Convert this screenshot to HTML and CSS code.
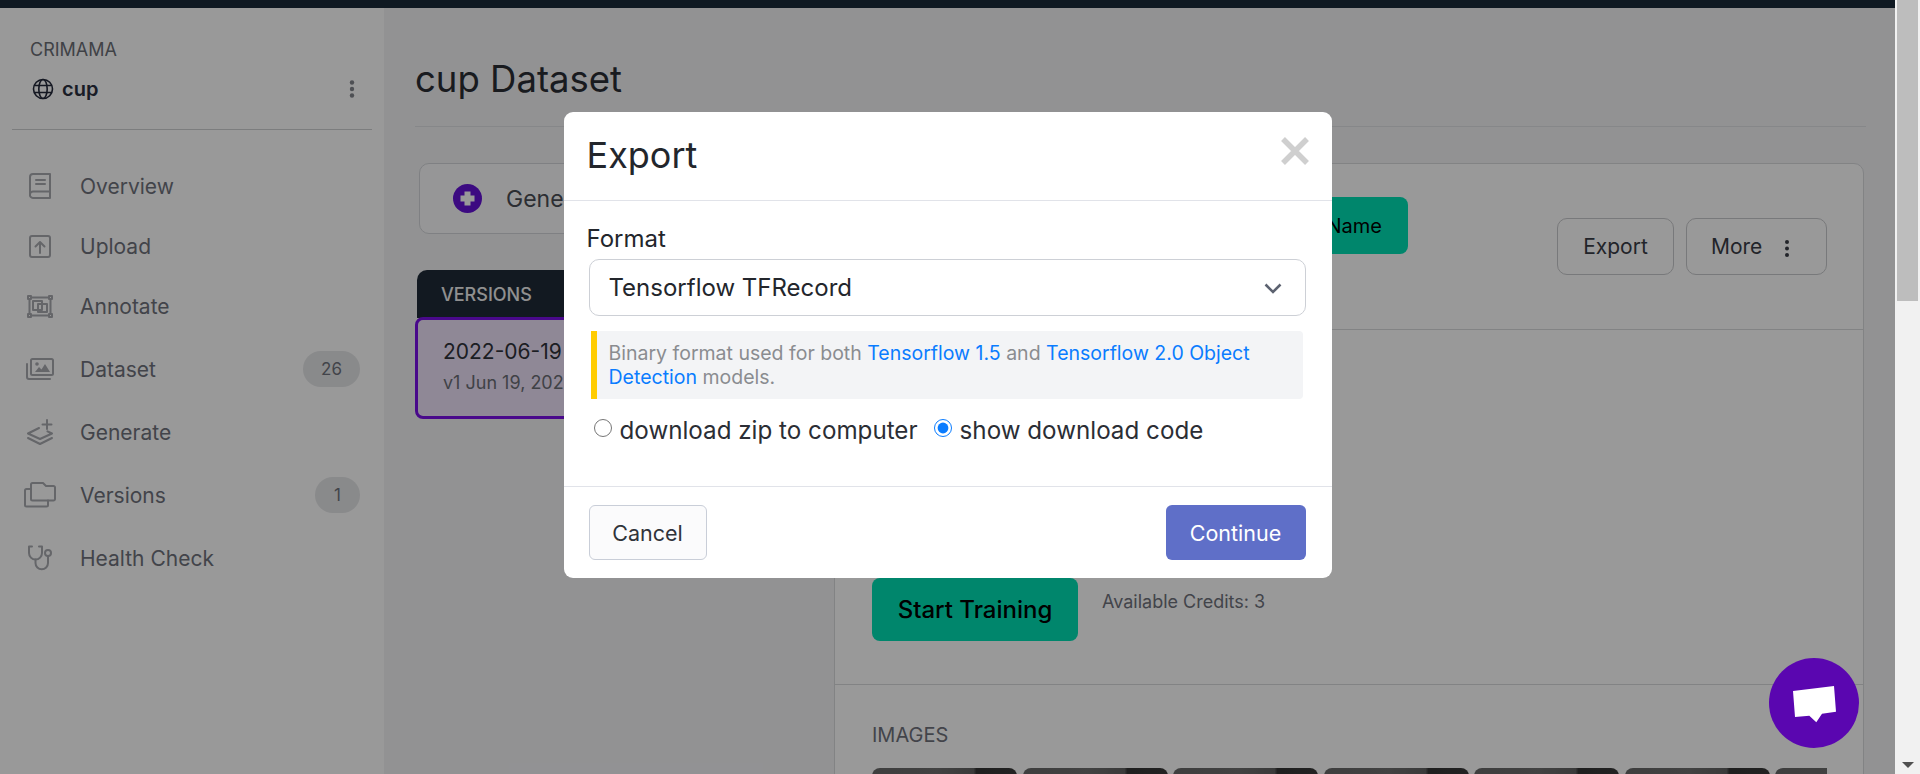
FILE: index.html
```html
<!DOCTYPE html>
<html lang="en">
<head>
  <meta charset="UTF-8">
  <title>cup Dataset</title>
  <link rel="stylesheet" href="styles.css">
</head>
<body>

<div class="page">
  <div class="topbar"></div>

  <div class="layout">
    <aside class="sidebar">
      <div class="workspace">CRIMAMA</div>
      <div class="project">
        <svg class="globe" viewBox="0 0 22 22" width="22" height="22"><circle cx="11" cy="11" r="9.5"/><ellipse cx="11" cy="11" rx="4.2" ry="9.5"/><path d="M2 7.5h18M2 14.5h18"/></svg>
        <span class="project-name">cup</span>
        <svg class="project-dots" viewBox="0 0 6 18" width="6" height="18"><circle cx="3" cy="2.5" r="2.2"/><circle cx="3" cy="9" r="2.2"/><circle cx="3" cy="15.5" r="2.2"/></svg>
      </div>
      <hr class="side-line">

      <nav class="nav">
        <a class="nav-item">
          <span class="nav-icon"><svg viewBox="0 0 22 26" width="22" height="26"><path d="M1 21V4a3 3 0 0 1 3-3h17v24H4a3 3 0 0 1-3-3.5a3 3 0 0 1 3-3h17"/><path d="M7 7h9M7 11h9"/></svg></span>
          Overview
        </a>
        <a class="nav-item">
          <span class="nav-icon"><svg viewBox="0 0 22 23" width="22" height="23"><rect x="1" y="1" width="20" height="21" rx="2"/><path d="M11 18V7M6.5 11.5 11 7l4.5 4.5"/></svg></span>
          Upload
        </a>
        <a class="nav-item">
          <span class="nav-icon"><svg viewBox="0 0 26 23" width="26" height="23"><rect x="1" y="1" width="3" height="3"/><rect x="22" y="1" width="3" height="3"/><rect x="1" y="19" width="3" height="3"/><rect x="22" y="19" width="3" height="3"/><path d="M4 2.5h18M4 20.5h18M2.5 4v15M23.5 4v15"/><rect x="6" y="6" width="9" height="9"/><rect x="11" y="9" width="9" height="8"/></svg></span>
          Annotate
        </a>
        <a class="nav-item nav-item-spaced">
          <span class="nav-icon"><svg viewBox="0 0 28 22" width="28" height="22"><rect x="5" y="1" width="22" height="16" rx="1.5"/><path d="M1 6v13a2 2 0 0 0 2 2h21"/><path class="solid" d="M9 14l4-5 2.5 2.5L19 6l5 8z"/><circle class="solid" cx="11" cy="6" r="1.8"/></svg></span>
          Dataset
          <span class="badge">26</span>
        </a>
        <a class="nav-item nav-item-spaced">
          <span class="nav-icon"><svg viewBox="0 0 26 26" width="26" height="26"><path d="M12 9 1 14.5l12 5.5 12-5.5-4.5-2.2"/><path d="M1 19l12 6 12-6"/><path d="M20 1v9M15.5 5.5h9"/></svg></span>
          Generate
        </a>
        <a class="nav-item nav-item-spaced">
          <span class="nav-icon"><svg viewBox="0 0 32 26" width="32" height="26"><path d="M7 16.5V2.5A1.5 1.5 0 0 1 8.5 1H19l3 3h7.5A1.5 1.5 0 0 1 31 5.5V17a1.5 1.5 0 0 1-1.5 1.500h-21A1.500 1.500 0 0 1 7 17z"/><path d="M7 7H2.500A1.500 1.500 0 0 0 1 8.500V23a1.500 1.500 0 0 0 1.500 1.500h20A1.500 1.500 0 0 0 24 23v-4.500"/></svg></span>
          Versions
          <span class="badge">1</span>
        </a>
        <a class="nav-item nav-item-spaced">
          <span class="nav-icon"><svg viewBox="0 0 26 26" width="26" height="26"><path d="M5 1.500H2V8a6.500 6.500 0 0 0 13 0V1.500h-3"/><path d="M8.500 14.500V18a6.200 6.200 0 0 0 12.500 0v-7"/><circle cx="21" cy="8" r="3"/></svg></span>
          Health Check
        </a>
      </nav>
    </aside>

    <main class="main">
      <h1 class="page-title">cup Dataset</h1>

      <div class="columns">
        <section class="left-col">
          <div class="generate-card">
            <svg class="plus" viewBox="0 0 29 29" width="29" height="29"><circle cx="14.5" cy="14.5" r="14.5"/><path d="M14.5 7.5v14M7.5 14.5h14"/></svg>
            Generate New Version
          </div>
          <div class="versions-head">VERSIONS</div>
          <div class="version-card">
            <div class="version-name">2022-06-19 1:12pm</div>
            <div class="version-date">v1 Jun 19, 2022</div>
          </div>
        </section>

        <section class="panel">
          <div class="panel-head">
            <button class="btn-green btn-name">Edit Name</button>
            <div class="panel-actions">
              <button class="btn-outline btn-export">Export</button>
              <button class="btn-outline btn-more">More
                <svg viewBox="0 0 6 18" width="6" height="18"><circle cx="3" cy="3" r="2"/><circle cx="3" cy="9.5" r="2"/><circle cx="3" cy="16" r="2"/></svg>
              </button>
            </div>
          </div>

          <div class="panel-train">
            <button class="btn-green btn-train">Start Training</button>
            <span class="credits">Available Credits: 3</span>
          </div>

          <div class="panel-images">
            <div class="images-label">IMAGES</div>
            <div class="thumbs">
              <div class="thumb"></div>
              <div class="thumb"></div>
              <div class="thumb"></div>
              <div class="thumb"></div>
              <div class="thumb"></div>
              <div class="thumb"></div>
              <div class="thumb"></div>
            </div>
          </div>
        </section>
      </div>
    </main>
  </div>

  <div class="overlay">
    <div class="modal">
      <div class="modal-head">
        <h2 class="modal-title">Export</h2>
        <svg class="modal-close" viewBox="0 0 28 28" width="28" height="28"><path d="M2 2l24 24M26 2 2 26"/></svg>
      </div>

      <div class="modal-body">
        <label class="field-label">Format</label>
        <div class="select">
          Tensorflow TFRecord
          <svg viewBox="0 0 18 11" width="18" height="11"><path d="M1.5 1.5 9 9l7.5-7.5"/></svg>
        </div>
        <p class="format-note">Binary format used for both <a>Tensorflow 1.5</a> and <a>Tensorflow 2.0 Object Detection</a> models.</p>
        <div class="radios">
          <label class="radio"><input type="radio" name="mode">download zip to computer</label>
          <label class="radio"><input type="radio" name="mode" checked>show download code</label>
        </div>
      </div>

      <div class="modal-foot">
        <button class="btn-cancel">Cancel</button>
        <button class="btn-continue">Continue</button>
      </div>
    </div>
  </div>

  <div class="chat">
    <svg viewBox="0 0 43 37" width="43" height="37"><path d="M0 5 41 0l2 25.7-14 2-5.700 8.600-7-6.600L2 31z"/></svg>
  </div>
</div>

<div class="scrollbar">
  <div class="thumb-bar"></div>
  <span class="arrow-down"></span>
</div>

</body>
</html>
```

FILE: styles.css
```css
* {
  box-sizing: border-box;
}

html, body {
  height: 100%;
}

body {
  margin: 0;
  display: flex;
  overflow: hidden;
  font-family: Inter, "Liberation Sans", sans-serif;
  color: #23262c;
  background: #f1f1f1;
}

.page {
  position: relative;
  flex: 1;
  height: 774px;
  overflow: hidden;
  background: #f3f4f6;
}

.topbar {
  height: 8px;
  background: #1a2a3a;
}

.layout {
  display: flex;
  height: 766px;
}

/* sidebar */
.sidebar {
  width: 384px;
  flex: none;
  background: #ffffff;
  padding-top: 32px;
}

.workspace {
  margin-left: 30px;
  font-size: 18px;
  line-height: 20px;
  color: #6b6e76;
}

.project {
  display: flex;
  align-items: center;
  margin: 15px 29px 0 32px;
  height: 28px;
}

.globe {
  fill: none;
  stroke: #23283a;
  stroke-width: 1.6;
}

.project-name {
  margin-left: 8px;
  font-size: 20px;
  font-weight: 600;
  color: #2b3040;
}

.project-dots {
  margin-left: auto;
  fill: #83858d;
}

.side-line {
  margin: 26px 12px;
  border: 0;
  border-top: 1px solid #cfd0d3;
}

.nav-item {
  display: flex;
  align-items: center;
  gap: 24px;
  height: 60px;
  padding: 0 24px;
  font-size: 21px;
  color: #6f727c;
}

.nav-item-spaced {
  margin-top: 3px;
}

.nav-icon {
  width: 32px;
  display: flex;
  justify-content: center;
}

.nav-icon svg {
  fill: none;
  stroke: #a8aab0;
  stroke-width: 2;
  stroke-linejoin: round;
  stroke-linecap: round;
}

.nav-icon .solid {
  fill: #a8aab0;
  stroke: none;
}

.badge {
  margin-left: auto;
  min-width: 45px;
  height: 36px;
  padding: 0 18px;
  border-radius: 18px;
  background: #e5e6e8;
  font-size: 17px;
  line-height: 36px;
  text-align: center;
  color: #6f727c;
}

/* main area */
.main {
  flex: 1;
  min-width: 0;
  padding: 0 31px;
}

.page-title {
  height: 119px;
  margin: 0 -2px 36px 0;
  padding-top: 49px;
  border-bottom: 1px solid #e0e1e4;
  font-size: 36.5px;
  font-weight: 400;
  line-height: 44px;
  color: #2b2e35;
}

.columns {
  display: flex;
  align-items: flex-start;
}

.left-col {
  width: 419px;
  flex: none;
}

.generate-card {
  display: flex;
  align-items: center;
  gap: 24px;
  width: 400px;
  height: 71px;
  margin-left: 4px;
  padding-left: 33px;
  border: 1px solid #d4d6da;
  border-radius: 10px;
  background: #fbfbfc;
  font-size: 23px;
  color: #4a4d55;
}

.plus {
  fill: #6412d8;
}

.plus path {
  stroke: #ffffff;
  stroke-width: 6;
}

.versions-head {
  width: 402px;
  height: 48px;
  margin: 36px 0 0 2px;
  padding-left: 24px;
  border-radius: 10px 10px 0 0;
  background: #1e2b38;
  font-size: 18px;
  font-weight: 500;
  line-height: 49px;
  color: #f0f0f0;
}

.version-card {
  width: 404px;
  height: 102px;
  margin-top: -1px;
  padding: 19px 25px;
  border: 3px solid #7a10e8;
  border-radius: 8px;
  background: #efe3fa;
}

.version-name {
  font-size: 21px;
  line-height: 26px;
  color: #30323a;
}

.version-date {
  margin-top: 7px;
  font-size: 18px;
  line-height: 22px;
  color: #6b6e76;
}

.panel {
  flex: 1;
  min-width: 0;
  height: 700px;
  border: 1px solid #d9dadd;
  border-radius: 10px;
  background: #ffffff;
}

.panel-head {
  display: flex;
  justify-content: flex-end;
  align-items: flex-start;
  gap: 149px;
  height: 166px;
  padding: 33px 36px 0 0;
  border-bottom: 1px solid #d9dadd;
}

.panel-actions {
  display: flex;
  gap: 12px;
  margin-top: 21px;
}

button {
  font-family: inherit;
  cursor: pointer;
}

.btn-green {
  border: 0;
  border-radius: 8px;
  background: #00e0b4;
  color: #000000;
}

.btn-name {
  width: 200px;
  height: 57px;
  padding-right: 26px;
  font-size: 20px;
  text-align: right;
}

.btn-outline {
  height: 57px;
  border: 1px solid #c9cacd;
  border-radius: 10px;
  background: #ffffff;
  font-size: 21px;
  color: #3a3d46;
}

.btn-export {
  width: 117px;
}

.btn-more {
  display: flex;
  align-items: center;
  gap: 22px;
  width: 141px;
  padding: 0 24px;
}

.btn-more svg {
  fill: #3a3d46;
  margin-top: 3px;
}

.panel-train {
  display: flex;
  align-items: flex-start;
  gap: 24px;
  height: 355px;
  padding: 248px 0 0 37px;
  border-bottom: 1px solid #d9dadd;
}

.btn-train {
  width: 206px;
  height: 63px;
  font-size: 24px;
  font-weight: 500;
}

.credits {
  margin-top: 13px;
  font-size: 18px;
  line-height: 22px;
  color: #6f727c;
}

.panel-images {
  padding: 37px 36px 0 37px;
}

.images-label {
  font-size: 20px;
  line-height: 26px;
  color: #6f727c;
}

.thumbs {
  display: flex;
  gap: 5.5px;
  margin-top: 20px;
  overflow: hidden;
}

.thumb {
  width: 145px;
  height: 40px;
  flex: none;
  border-radius: 8px 8px 0 0;
  background: linear-gradient(90deg, #686868 0%, #6e6e6e 45%, #626262 70%, #343434 72%, #3a3a3a 100%);
}

/* export dialog */
.overlay {
  position: absolute;
  inset: 0;
  display: flex;
  justify-content: center;
  align-items: flex-start;
  padding-top: 112px;
  background: rgba(0, 0, 0, 0.4);
}

.modal {
  width: 768px;
  height: 466px;
  border-radius: 9px;
  background: #ffffff;
}

.modal-head {
  display: flex;
  justify-content: space-between;
  height: 89px;
  padding: 17px 23px 0 23px;
  border-bottom: 1px solid #e1e3e9;
}

.modal-title {
  margin: 0;
  font-size: 36px;
  font-weight: 400;
  line-height: 52px;
  color: #23262c;
}

.modal-close {
  margin-top: 8px;
  fill: none;
  stroke: #cfcfcf;
  stroke-width: 5.5;
}

.modal-body {
  height: 285px;
  padding: 24px 26px 0 23px;
}

.field-label {
  display: block;
  font-size: 24px;
  line-height: 28px;
}

.select {
  display: flex;
  align-items: center;
  justify-content: space-between;
  height: 57px;
  margin: 6px 0 0 2px;
  padding: 0 23px 0 19px;
  border: 1px solid #cdd0d6;
  border-radius: 10px;
  font-size: 24px;
}

.select svg {
  fill: none;
  stroke: #5c6270;
  stroke-width: 2.5;
  margin-top: 2px;
}

.format-note {
  height: 68px;
  margin: 15px 3px 0 4px;
  padding: 10px 12px 0 12px;
  border-left: 6px solid #ffcc00;
  border-radius: 0 4px 4px 0;
  background: #f3f4f6;
  font-size: 19.5px;
  line-height: 24px;
  color: #8a8c90;
}

.format-note a {
  color: #0a7cff;
}

.radios {
  display: flex;
  gap: 16px;
  margin: 16px 0 0 7px;
}

.radio {
  display: flex;
  align-items: center;
  font-size: 24.2px;
  line-height: 32px;
  color: #2b2e35;
}

.radio input {
  width: 18px;
  height: 18px;
  margin: -6px 8px 0 0;
  accent-color: #0a7cff;
}

.modal-foot {
  display: flex;
  justify-content: space-between;
  align-items: center;
  height: 92px;
  padding: 0 26px 0 25px;
  border-top: 1px solid #e1e3e9;
}

.btn-cancel,
.btn-continue {
  height: 55px;
  border-radius: 6px;
  font-size: 21.5px;
}

.btn-cancel {
  width: 118px;
  border: 1px solid #c9ced8;
  background: #fbfbfc;
  color: #30333a;
}

.btn-continue {
  width: 140px;
  border: 0;
  background: #5f6fc8;
  color: #ffffff;
}

/* chat bubble over the dimmed page */
.chat {
  position: absolute;
  left: 1769px;
  top: 658px;
  display: flex;
  align-items: center;
  justify-content: center;
  width: 90px;
  height: 90px;
  border-radius: 50%;
  background: #5a06b0;
}

.chat svg {
  fill: #ffffff;
  margin-top: 2px;
}

/* window scrollbar */
.scrollbar {
  display: flex;
  flex-direction: column;
  align-items: center;
  width: 25px;
  flex: none;
  background: #f1f1f1;
}

.thumb-bar {
  width: 21px;
  height: 301px;
  background: #bdbdbd;
}

.arrow-down {
  width: 0;
  height: 0;
  margin-top: auto;
  margin-bottom: 6px;
  border-left: 6px solid transparent;
  border-right: 6px solid transparent;
  border-top: 6px solid #505050;
}
```
